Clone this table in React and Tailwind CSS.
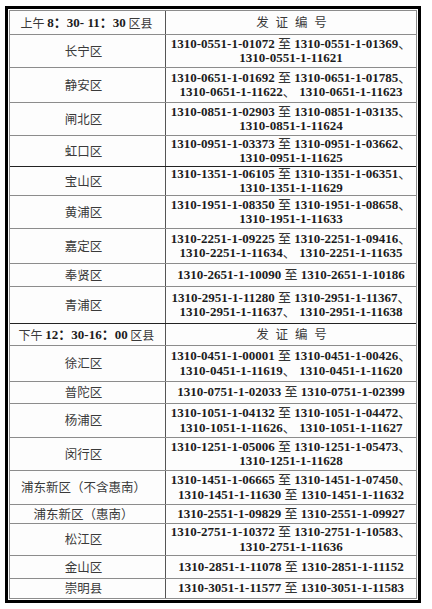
import React from 'react';

const numFont = "font-['Liberation_Serif','Noto_Sans_CJK_SC',serif]";
const cjkFont = "font-['Noto_Sans_CJK_SC',sans-serif]";

// district, lines of the right column, row height (incl. bottom line), line style
const morning = [
  ['长宁区', ['1310-0551-1-01072 至 1310-0551-1-01369、', '1310-0551-1-11621'], 'h-[33px]'],
  ['静安区', ['1310-0651-1-01692 至 1310-0651-1-01785、', '1310-0651-1-11622、 1310-0651-1-11623'], 'h-[35px]'],
  ['闸北区', ['1310-0851-1-02903 至 1310-0851-1-03135、', '1310-0851-1-11624'], 'h-[33px]'],
  ['虹口区', ['1310-0951-1-03373 至 1310-0951-1-03662、', '1310-0951-1-11625'], 'h-[31px]', 'dark'],
  ['宝山区', ['1310-1351-1-06105 至 1310-1351-1-06351、', '1310-1351-1-11629'], 'h-[29px]'],
  ['黄浦区', ['1310-1951-1-08350 至 1310-1951-1-08658、', '1310-1951-1-11633'], 'h-[33px]'],
  ['嘉定区', ['1310-2251-1-09225 至 1310-2251-1-09416、', '1310-2251-1-11634、 1310-2251-1-11635'], 'h-[35px]'],
  ['奉贤区', ['1310-2651-1-10090 至 1310-2651-1-10186'], 'h-[23px]'],
  ['青浦区', ['1310-2951-1-11280 至 1310-2951-1-11367、', '1310-2951-1-11637、 1310-2951-1-11638'], 'h-[37px]', 'dark'],
];

const afternoon = [
  ['徐汇区', ['1310-0451-1-00001 至 1310-0451-1-00426、', '1310-0451-1-11619、 1310-0451-1-11620'], 'h-[36px]'],
  ['普陀区', ['1310-0751-1-02033 至 1310-0751-1-02399'], 'h-[22px]'],
  ['杨浦区', ['1310-1051-1-04132 至 1310-1051-1-04472、', '1310-1051-1-11626、 1310-1051-1-11627'], 'h-[34px]'],
  ['闵行区', ['1310-1251-1-05006 至 1310-1251-1-05473、', '1310-1251-1-11628'], 'h-[33px]'],
  ['浦东新区（不含惠南）', ['1310-1451-1-06665 至 1310-1451-1-07450、', '1310-1451-1-11630 至 1310-1451-1-11632'], 'h-[34px]'],
  ['浦东新区（惠南）', ['1310-2551-1-09829 至 1310-2551-1-09927'], 'h-[19px]'],
  ['松江区', ['1310-2751-1-10372 至 1310-2751-1-10583、', '1310-2751-1-11636'], 'h-[32px]'],
  ['金山区', ['1310-2851-1-11078 至 1310-2851-1-11152'], 'h-[23px]'],
  ['崇明县', ['1310-3051-1-11577 至 1310-3051-1-11583'], 'h-[19px]', 'last'],
];

// 至 and 、 are set light, like the scan
function NumLine({ text }) {
  const parts = text.split(/(至|、)/);
  return (
    <div className="whitespace-pre">
      {parts.map((p, i) =>
        p === '至' || p === '、' ? (
          <span key={i} className="font-normal text-[#333]">
            {p}
          </span>
        ) : (
          <span key={i}>{p}</span>
        )
      )}
    </div>
  );
}

function Row({ name, lines, h, line }) {
  const border =
    line === 'last' ? '' : line === 'dark' ? 'border-b border-[#222]' : 'border-b border-[#8c8c8c]';
  return (
    <div className={`flex ${h} ${border}`}>
      <div
        className={`w-[156px] shrink-0 flex items-center justify-center pr-[8px] border-r border-[#555] text-[12.5px] text-[#3a3a3a] ${cjkFont}`}
      >
        {name}
      </div>
      <div
        className={`flex-1 flex flex-col items-center justify-center text-[13px] leading-[14.5px] font-bold text-[#1c1c1c] ${numFont}`}
      >
        {lines.map((l, i) => (
          <NumLine key={i} text={l} />
        ))}
      </div>
    </div>
  );
}

function Header({ time, h }) {
  return (
    <div className={`flex border-b border-[#8c8c8c] ${h}`}>
      <div className="w-[156px] shrink-0 flex items-center justify-center pr-[2px] border-r border-[#555] text-[12px] text-[#3a3a3a] whitespace-pre">
        <span className={cjkFont}>{time[0]} </span>
        <span className={`font-bold text-[13px] text-[#1c1c1c] ${numFont}`}>{time[1]}</span>
        <span className={cjkFont}> 区县</span>
      </div>
      <div
        className={`flex-1 flex items-center justify-center text-[12.5px] tracking-[0.55em] pl-[8px] text-[#3a3a3a] ${cjkFont}`}
      >
        发证编号
      </div>
    </div>
  );
}

export default function App() {
  return (
    <div className="w-[432px] h-[609px] bg-white overflow-hidden">
      <div className="ml-[5px] mt-[6px] w-[416px] border-[3px] border-black p-px">
        <div className="border border-[#8c8c8c] bg-[#fdfdfd]">
          <Header time={['上午', '8：30- 11：30']} h="h-[24px]" />
          {morning.map(([name, lines, h, line]) => (
            <Row key={name} name={name} lines={lines} h={h} line={line} />
          ))}
          <Header time={['下午', '12：30-16：00']} h="h-[22px]" />
          {afternoon.map(([name, lines, h, line]) => (
            <Row key={name} name={name} lines={lines} h={h} line={line} />
          ))}
        </div>
      </div>
    </div>
  );
}
